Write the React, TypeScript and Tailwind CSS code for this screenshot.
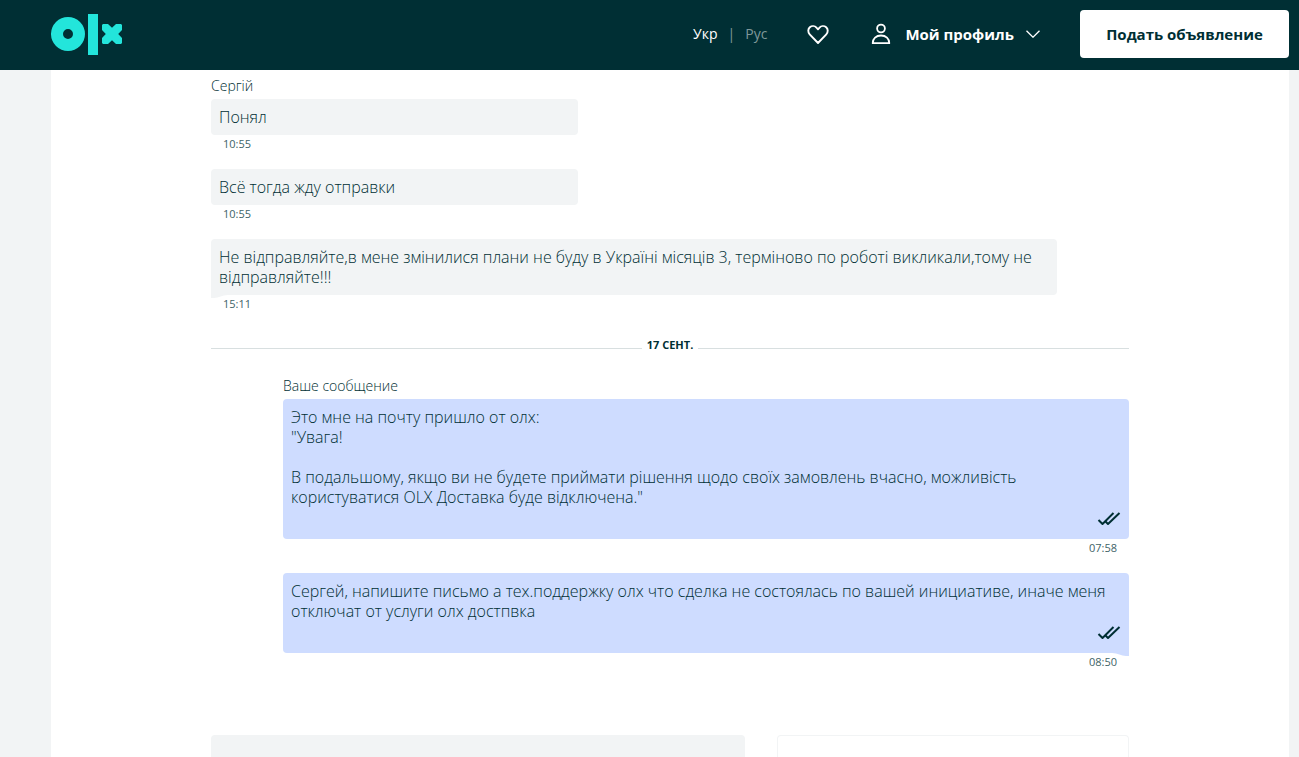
import { clsx } from 'clsx';

type Message = {
  text: string;
  time: string;
  tail?: boolean;
};

const received: Message[] = [
  { text: 'Понял', time: '10:55' },
  { text: 'Всё тогда жду отправки', time: '10:55' },
  {
    text: 'Не відправляйте,в мене змінилися плани не буду в Україні місяців 3, терміново по роботі викликали,тому не відправляйте!!!',
    time: '15:11',
    tail: true,
  },
];

const sent: Message[] = [
  {
    text: 'Это мне на почту пришло от олх:\n"Увага!\n\nВ подальшому, якщо ви не будете приймати рішення щодо своїх замовлень вчасно, можливість користуватися OLX Доставка буде відключена."',
    time: '07:58',
  },
  {
    text: 'Сергей, напишите письмо а тех.поддержку олх что сделка не состоялась по вашей инициативе, иначе меня отключат от услуги олх достпвка',
    time: '08:50',
    tail: true,
  },
];

function Logo() {
  return (
    <svg width="72" height="42" viewBox="0 0 72 42" fill="#23e5db" aria-hidden="true">
      <path
        fillRule="evenodd"
        d="M17 3a17 17 0 1 0 0 34 17 17 0 0 0 0-34Zm0 12a5 5 0 1 1 0 10 5 5 0 0 1 0-10Z"
      />
      <path d="M37 0h10v41H37z" />
      <path d="M52 10h5l4 3.700 4-3.700h5l1 1v5l-3.800 4 3.800 4v5l-1 1h-5l-4-3.700-4 3.700h-5l-1-1v-5l3.800-4-3.800-4v-5z" />
    </svg>
  );
}

function HeartIcon() {
  return (
    <svg width="22" height="22" viewBox="0 -2 22 22" fill="none" stroke="currentColor" strokeWidth="1.900" strokeLinejoin="round" aria-hidden="true">
      <path d="M11 18 2.700 9.300C.7 7.200.9 4 2.800 2.300c2.100-1.800 5-1.500 6.700.4L11 4.300l1.500-1.600c1.700-1.900 4.600-2.200 6.700-.4 1.900 1.700 2.100 4.900.1 7z" />
    </svg>
  );
}

function UserIcon() {
  return (
    <svg width="22" height="22" viewBox="0 0 22 22" fill="none" stroke="currentColor" strokeWidth="1.800" strokeLinejoin="round" aria-hidden="true">
      <circle cx="10" cy="5.500" r="3.900" />
      <path d="M1.700 20.200c0-4.500 3.400-7.700 8.300-7.700s8.300 3.200 8.300 7.700z" />
    </svg>
  );
}

function ChevronIcon() {
  return (
    <svg width="14" height="8" viewBox="0 0 14 8" fill="none" stroke="currentColor" strokeWidth="1.300" aria-hidden="true">
      <path d="M.5.7 7 7.200 13.500.7" />
    </svg>
  );
}

function ReadIcon() {
  return (
    <svg width="24" height="16" viewBox="0 0 24 16" fill="none" stroke="currentColor" strokeWidth="2" strokeLinejoin="round" aria-hidden="true">
      <path d="M1.500 9 5.500 13 16.500 2" />
      <path d="M8 10 11 13 22.500 2" />
    </svg>
  );
}

function Header() {
  return (
    <header className="flex h-[70px] shrink-0 items-center justify-between bg-[#002f34] pl-[51px] pr-[10px] text-white">
      <a href="#" aria-label="OLX">
        <Logo />
      </a>

      <div className="flex items-center pb-0.5">
        <nav className="flex items-center gap-2.5 text-sm">
          <a href="#">Укр</a>
          <span className="text-[#7f9799]">|</span>
          <a href="#" className="text-[#7f9799]">
            Рус
          </a>
        </nav>
        <button aria-label="Избранное" className="ml-10">
          <HeartIcon />
        </button>
        <button className="ml-[42px] flex items-center gap-3 text-[15px] font-bold">
          <UserIcon />
          Мой профиль
          <ChevronIcon />
        </button>
        <button className="ml-10 h-12 w-[209px] rounded bg-white text-[15px] font-bold text-[#002f34]">
          Подать объявление
        </button>
      </div>
    </header>
  );
}

function ReceivedMessage({ text, time, tail }: Message) {
  return (
    <li className="mr-[72px] flex flex-col items-start">
      <div
        className={clsx(
          'relative min-w-[367px] rounded bg-[#f2f4f5] p-2 leading-5 whitespace-pre-line',
          tail && 'rounded-bl-none'
        )}
      >
        {text}
        {tail && (
          <svg className="absolute top-full left-0 text-[#f2f4f5]" width="17" height="3" viewBox="0 0 17 3" aria-hidden="true">
            <path d="M0 0h17C11 .3 8 2.800 3 3H0z" fill="currentColor" />
          </svg>
        )}
      </div>
      <time className="ml-3 text-[11px] leading-[18px] font-normal text-[#406367]">{time}</time>
    </li>
  );
}

function SentMessage({ text, time, tail }: Message) {
  return (
    <li className="ml-[72px] flex flex-col items-end">
      <div
        className={clsx(
          'relative w-full rounded bg-[#cedcff] p-2 leading-5 whitespace-pre-line',
          tail && 'rounded-br-none'
        )}
      >
        {text}
        <div className="flex h-6 items-center justify-end">
          <ReadIcon />
        </div>
        {tail && (
          <svg className="absolute top-full right-0 text-[#cedcff]" width="17" height="3" viewBox="0 0 17 3" aria-hidden="true">
            <path d="M17 0H0c6 .3 9 2.800 14 3h3z" fill="currentColor" />
          </svg>
        )}
      </div>
      <time className="mr-3 text-[11px] leading-[18px] font-normal text-[#406367]">{time}</time>
    </li>
  );
}

export default function App() {
  return (
    <div className="flex h-screen flex-col overflow-hidden bg-[#f2f4f5] font-['Open_Sans',sans-serif] text-[#002f34]">
      <Header />

      <main className="ml-[51px] mr-[10px] flex flex-1 flex-col bg-white px-40 pt-[6px] font-light">
        <p className="mb-[3px] text-sm">Сергій</p>
        <ul className="flex flex-col gap-4">
          {received.map((message, i) => (
            <ReceivedMessage key={i} {...message} />
          ))}
        </ul>

        <div className="mt-6 flex items-end gap-[5px] text-[11px] leading-4 font-bold">
          <span className="mb-1 h-px flex-1 bg-[#d8dfe0]" />
          17 СЕНТ.
          <span className="mb-1 h-px flex-1 bg-[#d8dfe0]" />
        </div>

        <p className="mt-[23px] mb-[3px] ml-[72px] text-sm">Ваше сообщение</p>
        <ul className="flex flex-col gap-4">
          {sent.map((message, i) => (
            <SentMessage key={i} {...message} />
          ))}
        </ul>

        <div className="mt-16 flex flex-1 gap-8">
          <div className="flex-1 rounded-t bg-[#f2f4f5]" />
          <div className="w-[352px] rounded-t border border-b-0 border-[#f2f4f5]" />
        </div>
      </main>
    </div>
  );
}
